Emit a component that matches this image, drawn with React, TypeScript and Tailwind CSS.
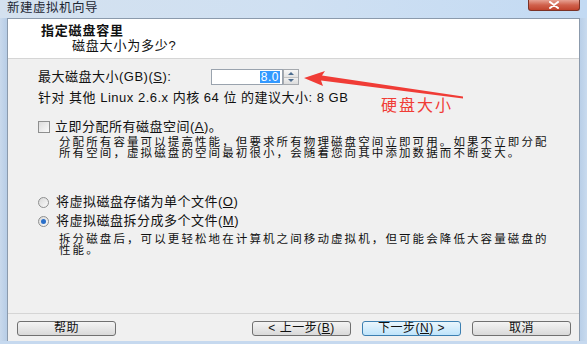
import React from 'react';

const font = "font-['Liberation_Sans','Noto_Sans_CJK_SC',sans-serif]";

function Btn({ children, primary = false, className = '' }: { children: React.ReactNode; primary?: boolean; className?: string }) {
  return (
    <div
      className={
        'h-[15px] flex items-center justify-center rounded-[3px] border text-[12px] leading-[13px] tracking-[0.5px] text-[#111] ' +
        (primary
          ? 'border-[#3c7fb1] bg-gradient-to-b from-[#eaf6fd] to-[#bfe4fb] '
          : 'border-[#707070] bg-gradient-to-b from-[#f4f4f4] to-[#d9d9d9] ') +
        className
      }
    >
      {children}
    </div>
  );
}

export default function App() {
  return (
    <div className={`relative w-[587px] h-[344px] overflow-hidden bg-[#c6d9ef] ${font} text-[#111]`}>
      {/* Title bar */}
      <div className="h-[18px] flex items-start bg-gradient-to-r from-[#d4e1ef] via-[#cfe0f2] to-[#c3daf3]">
        <span className="ml-[7px] mt-[1px] text-[12.5px] leading-[14px] tracking-[0.5px] text-[#1d2633]">新建虚拟机向导</span>
        <div className="ml-auto mr-[7px] w-[52px] h-[11px] rounded-b-[3px] border border-t-0 border-[#7b3226] bg-gradient-to-b from-[#e6a193] via-[#d0614c] to-[#c1432d] flex items-center justify-center">
          <svg width="12" height="8" viewBox="0 0 12 8">
            <path d="M2 1 L10 7 M10 1 L2 7" stroke="#fff" strokeWidth="2" strokeLinecap="round" />
          </svg>
        </div>
      </div>

      <div className="flex h-[323px]">
        <div className="w-[7px] bg-gradient-to-r from-[#c9d9ec] to-[#b7cde6]" />
        <div className="flex-1 flex flex-col bg-[#f0f0f0] border-l border-r border-[#8b9aac]">
          {/* Header */}
          <div className="h-[41px] bg-white border-t border-[#8b9aac] border-b border-b-[#d5d5d5] pt-[5px]">
            <div className="pl-[33px] text-[13px] leading-[14px] font-bold tracking-[0.8px]">指定磁盘容里</div>
            <div className="pl-[64px] mt-[1px] text-[13px] leading-[14px] tracking-[0.8px]">磁盘大小为多少?</div>
          </div>

          {/* Body */}
          <div className="flex-1 flex flex-col pl-[30px] text-[13px] tracking-[0.5px]">
            <div className="mt-[10px] flex items-center h-[16px]">
              <span className="w-[173px] leading-[14px]">
                最大磁盘大小(GB)(<span className="underline">S</span>):
              </span>
              <div className="w-[72px] h-[16px] bg-white border border-[#9aa3ae] flex items-center justify-end pr-[2px]">
                <span className="bg-[#3399ff] text-white text-[12px] leading-[12px] px-[1px]">8.0</span>
              </div>
              <div className="w-[16px] h-[16px] flex flex-col border border-[#a5a9ae] bg-[#ececec]">
                <div className="flex-1 flex items-center justify-center border-b border-[#c3c3c3] bg-gradient-to-b from-[#f6f6f6] to-[#e3e3e3]">
                  <svg width="6" height="3" viewBox="0 0 6 3"><path d="M0 3 L3 0 L6 3 Z" fill="#4d6d8f" /></svg>
                </div>
                <div className="flex-1 flex items-center justify-center bg-gradient-to-b from-[#f0f0f0] to-[#dcdcdc]">
                  <svg width="6" height="3" viewBox="0 0 6 3"><path d="M0 0 L6 0 L3 3 Z" fill="#4d6d8f" /></svg>
                </div>
              </div>
            </div>
            <div className="mt-[6px] leading-[14px]">针对 其他 Linux 2.6.x 内核 64 位 的建议大小: 8 GB</div>

            <div className="mt-[15px] flex items-center h-[14px]">
              <div className="w-[12px] h-[12px] border border-[#8e8f8f] bg-gradient-to-br from-[#dcdcdc] to-[#fafafa] mr-[5px]" />
              <span className="leading-[14px]">
                立即分配所有磁盘空间(<span className="underline">A</span>)。
              </span>
            </div>
            <div className="mt-[3px] pl-[21px] whitespace-nowrap text-[11.5px] leading-[11px] tracking-[2.1px]">
              分配所有容量可以提高性能，但要求所有物理磁盘空间立即可用。如果不立即分配
              <br />
              所有空间，虚拟磁盘的空间最初很小，会随着您向其中添加数据而不断变大。
            </div>

            <div className="mt-[36px] flex items-center h-[14px]">
              <div className="w-[11px] h-[11px] rounded-full border border-[#8e8f8f] bg-gradient-to-br from-[#d8d8d8] to-[#fbfbfb] mr-[7px]" />
              <span className="leading-[14px]">
                将虚拟磁盘存储为单个文件(<span className="underline">O</span>)
              </span>
            </div>
            <div className="mt-[5px] flex items-center h-[14px]">
              <div className="w-[11px] h-[11px] rounded-full border border-[#8e8f8f] bg-gradient-to-br from-[#d8d8d8] to-[#fbfbfb] mr-[7px] flex items-center justify-center">
                <div className="w-[5px] h-[5px] rounded-full bg-[#2a6fc9]" />
              </div>
              <span className="leading-[14px]">
                将虚拟磁盘拆分成多个文件(<span className="underline">M</span>)
              </span>
            </div>
            <div className="mt-[6px] pl-[21px] whitespace-nowrap text-[11.5px] leading-[11px] tracking-[2.1px]">
              拆分磁盘后，可以更轻松地在计算机之间移动虚拟机，但可能会降低大容量磁盘的
              <br />
              性能。
            </div>
          </div>

          {/* Footer */}
          <div className="h-[28px] border-t border-[#d5d5d5] flex items-start pt-[7px] pl-[9px] pr-[8px]">
            <Btn className="w-[99px]">帮助</Btn>
            <Btn className="w-[99px] ml-auto">
              &lt; 上一步(<span className="underline">B</span>)
            </Btn>
            <Btn primary className="w-[99px] ml-[11px]">
              下一步(<span className="underline">N</span>) &gt;
            </Btn>
            <Btn className="w-[99px] ml-[11px]">取消</Btn>
          </div>
        </div>
        <div className="w-[7px] bg-gradient-to-r from-[#b9cfe8] to-[#c8daee]" />
      </div>

      {/* Annotation overlay */}
      <svg className="absolute left-0 top-0 pointer-events-none" width="587" height="344" viewBox="0 0 587 344">
        <polygon points="304,78 325,71 322,75.5 463,96.5 463,98.5 321,80.5 323,86" fill="#f03c36" />
      </svg>
      <div className="absolute left-[381px] top-[97px] text-[16px] leading-[18px] tracking-[2px] text-[#f03c36]">硬盘大小</div>
    </div>
  );
}
